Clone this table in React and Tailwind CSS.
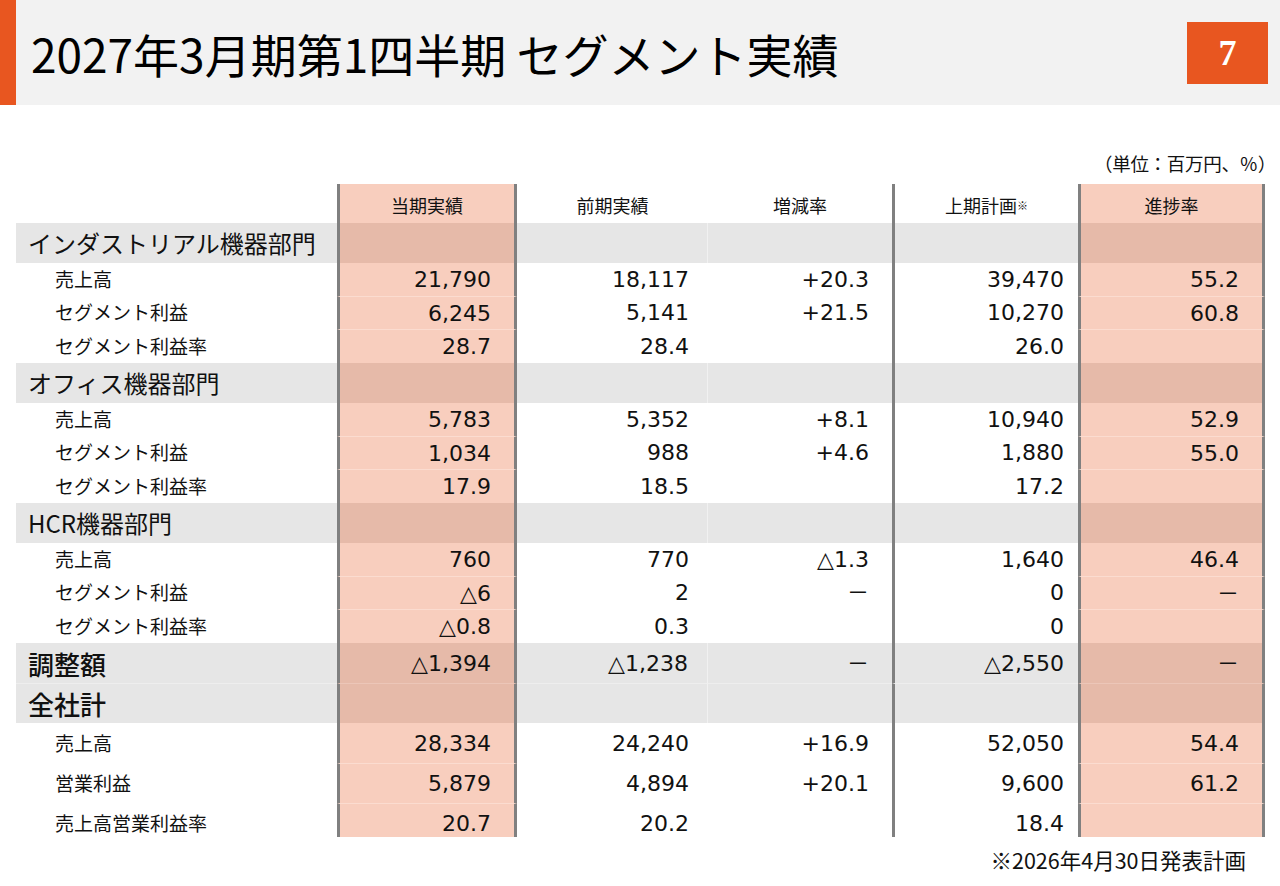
import React from 'react';

const jp = { fontFamily: '"Noto Sans CJK JP", "Noto Sans", sans-serif' };
const num = { fontFamily: '"DejaVu Sans", "Noto Sans CJK JP", sans-serif' };

const sections = [
    {
        title: 'インダストリアル機器部門',
        rows: [
            ['売上高', '21,790', '18,117', '+20.3', '39,470', '55.2'],
            ['セグメント利益', '6,245', '5,141', '+21.5', '10,270', '60.8'],
            ['セグメント利益率', '28.7', '28.4', '', '26.0', ''],
        ],
    },
    {
        title: 'オフィス機器部門',
        rows: [
            ['売上高', '5,783', '5,352', '+8.1', '10,940', '52.9'],
            ['セグメント利益', '1,034', '988', '+4.6', '1,880', '55.0'],
            ['セグメント利益率', '17.9', '18.5', '', '17.2', ''],
        ],
    },
    {
        title: 'HCR機器部門',
        rows: [
            ['売上高', '760', '770', '△1.3', '1,640', '46.4'],
            ['セグメント利益', '△6', '2', '－', '0', '－'],
            ['セグメント利益率', '△0.8', '0.3', '', '0', ''],
        ],
    },
];

const totalRows = [
    ['売上高', '28,334', '24,240', '+16.9', '52,050', '54.4'],
    ['営業利益', '5,879', '4,894', '+20.1', '9,600', '61.2'],
    ['売上高営業利益率', '20.7', '20.2', '', '18.4', ''],
];

// cells of the 5 value columns; pink columns carry the thick gray side borders
const Cells = ({ values, gray, line, pad }) => {
    const pink = gray ? 'bg-[#e6baa9]' : 'bg-[#f8cebe]';
    const plain = gray ? 'bg-[#e6e6e6]' : 'bg-white';
    const pinkLine = line ? (gray ? 'border-t border-t-[#ecc6b8]' : 'border-t border-t-[#fbdcd0]') : '';
    const plainLine = line && gray ? 'border-t border-t-[#eeeeee]' : '';
    const p = pad ? 'pt-[6px]' : '';
    return (
        <>
            <div className={`w-[180px] h-full flex items-center justify-end pr-[23px] border-x-[3px] border-x-[#808080] ${pink} ${pinkLine} ${p}`}>
                {values[0]}
            </div>
            <div className={`w-[191px] h-full flex items-center justify-end pr-[19px] ${plain} ${plainLine} ${p} ${gray ? 'border-r border-r-[#f1f1f1]' : ''}`}>
                {values[1]}
            </div>
            <div className={`w-[184px] h-full flex items-center justify-end pr-[23px] ${plain} ${plainLine} ${p}`}>
                {values[2]}
            </div>
            <div className={`w-[186px] h-full flex items-center justify-end pr-[14px] border-l-[3px] border-l-[#808080] ${plain} ${plainLine} ${p}`}>
                {values[3]}
            </div>
            <div className={`w-[187px] h-full flex items-center justify-end pr-[23px] border-x-[3px] border-x-[#808080] ${pink} ${pinkLine} ${p}`}>
                {values[4]}
            </div>
        </>
    );
};

const DataRow = ({ row, h, line, last }) => (
    <div className={`flex ${h}`}>
        <div className={`w-[321px] h-full flex items-center pl-[39px] text-[19px] text-[#111] ${last ? 'pt-[6px]' : ''}`} style={jp}>
            {row[0]}
        </div>
        <div className="flex h-full text-[22px] text-[#111]" style={num}>
            <Cells values={row.slice(1)} line={line} pad={last} />
        </div>
    </div>
);

const GroupRow = ({ title, values = ['', '', '', '', ''], big, line }) => (
    <div className="flex h-[40px]">
        <div
            className={`w-[321px] h-full flex items-center pl-[12px] bg-[#e6e6e6] text-[#111] ${big ? 'text-[26px] font-medium' : 'text-[24px]'} ${line ? 'border-t border-t-[#eeeeee]' : ''}`}
            style={jp}
        >
            {title}
        </div>
        <div className="flex h-full text-[22px] text-[#111]" style={num}>
            <Cells values={values} gray line={line} />
        </div>
    </div>
);

export default function App() {
    return (
        <div className="w-[1280px] h-[886px] bg-white overflow-hidden text-[#111]" style={jp}>
            {/* title band */}
            <div className="flex items-center h-[105px] bg-[#f2f2f2]">
                <div className="w-[16px] h-full bg-[#e85620]" />
                <h1 className="ml-[15px] text-[46px] leading-none text-black">
                    2027年3月期第1四半期 セグメント実績
                </h1>
                <div
                    className="ml-auto mr-[12px] w-[81px] h-[62px] bg-[#e85620] flex items-center justify-center text-white text-[36px] font-bold"
                    style={{ fontFamily: '"Liberation Serif", "DejaVu Serif", serif' }}
                >
                    7
                </div>
            </div>

            <div className="mt-[44px] h-[28px] leading-[28px] text-right pr-[4px] text-[18.5px] tracking-[-0.3px]">
                （単位：百万円、％）
            </div>

            <div className="mt-[7px] ml-[16px]">
                {/* column heads */}
                <div className="flex h-[39px] text-[18px]">
                    <div className="w-[321px]" />
                    <div className="w-[180px] flex items-center justify-center pt-[4px] bg-[#f8cebe] border-x-[3px] border-x-[#808080]">当期実績</div>
                    <div className="w-[191px] flex items-center justify-center pt-[4px]">前期実績</div>
                    <div className="w-[184px] flex items-center justify-center pt-[4px]">増減率</div>
                    <div className="w-[186px] flex items-center justify-center pt-[4px] border-l-[3px] border-l-[#808080]">
                        上期計画<span className="text-[11px] self-start mt-[9px]">※</span>
                    </div>
                    <div className="w-[187px] flex items-center justify-center pt-[4px] bg-[#f8cebe] border-x-[3px] border-x-[#808080]">進捗率</div>
                </div>

                {sections.map((s) => (
                    <div key={s.title}>
                        <GroupRow title={s.title} />
                        {s.rows.map((r, i) => (
                            <DataRow key={r[0]} row={r} h={i === 2 ? 'h-[34px]' : 'h-[33px]'} line={i > 0} />
                        ))}
                    </div>
                ))}

                <GroupRow title="調整額" big values={['△1,394', '△1,238', '－', '△2,550', '－']} />
                <GroupRow title="全社計" big line />
                {totalRows.map((r, i) => (
                    <DataRow key={r[0]} row={r} h={i === 2 ? 'h-[34px]' : 'h-[40px]'} line={i > 0} last={i === 2} />
                ))}
            </div>

            <div className="mt-[7px] pr-[34px] text-right text-[21.5px]">※2026年4月30日発表計画</div>
        </div>
    );
}
